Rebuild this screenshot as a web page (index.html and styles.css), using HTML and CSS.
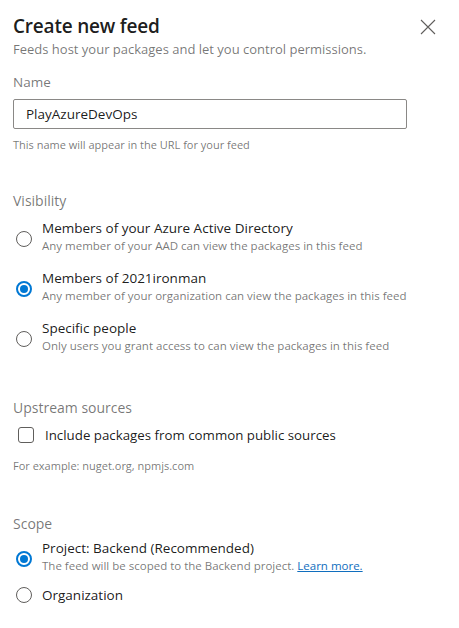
FILE: index.html
```html
<!DOCTYPE html>
<html lang="en">
<head>
  <meta charset="UTF-8">
  <title>Create new feed</title>
  <link rel="stylesheet" href="styles.css">
</head>
<body>
  <div class="panel">
    <div class="panel-header">
      <div>
        <h1 class="title">Create new feed</h1>
        <p class="subtitle">Feeds host your packages and let you control permissions.</p>
      </div>
      <button class="close" aria-label="Close">
        <svg width="16" height="16" viewBox="0 0 16 16"><path d="M1 1L15 15M15 1L1 15" stroke="#605e5c" stroke-width="1.1" fill="none"/></svg>
      </button>
    </div>

    <div class="section name-section">
      <label class="field-label" for="feed_name">Name</label>
      <input type="text" id="feed_name" class="text-input" value="PlayAzureDevOps">
      <p class="helper">This name will appear in the URL for your feed</p>
    </div>

    <div class="section visibility">
      <h2 class="section-title">Visibility</h2>
      <div class="option">
        <span class="radio"></span>
        <div class="option-text">
          <div class="option-label">Members of your Azure Active Directory</div>
          <div class="option-desc">Any member of your AAD can view the packages in this feed</div>
        </div>
      </div>
      <div class="option">
        <span class="radio checked"></span>
        <div class="option-text">
          <div class="option-label">Members of 2021ironman</div>
          <div class="option-desc">Any member of your organization can view the packages in this feed</div>
        </div>
      </div>
      <div class="option">
        <span class="radio"></span>
        <div class="option-text">
          <div class="option-label">Specific people</div>
          <div class="option-desc">Only users you grant access to can view the packages in this feed</div>
        </div>
      </div>
    </div>

    <div class="section upstream">
      <h2 class="section-title">Upstream sources</h2>
      <div class="check-row">
        <span class="checkbox"></span>
        <span class="option-label">Include packages from common public sources</span>
      </div>
      <p class="helper">For example: nuget.org, npmjs.com</p>
    </div>

    <div class="section scope">
      <h2 class="section-title">Scope</h2>
      <div class="option">
        <span class="radio checked"></span>
        <div class="option-text">
          <div class="option-label">Project: Backend (Recommended)</div>
          <div class="option-desc">The feed will be scoped to the Backend project. <a href="#">Learn more.</a></div>
        </div>
      </div>
      <div class="option single">
        <span class="radio"></span>
        <div class="option-text">
          <div class="option-label">Organization</div>
        </div>
      </div>
    </div>
  </div>
</body>
</html>
```

FILE: styles.css
```css
body {
  margin: 0;
  background: #fff;
  font-family: "Open Sans", "Noto Sans", Arial, sans-serif;
  color: rgba(0, 0, 0, 0.9);
}

.panel {
  padding: 12px 13px;
}

.panel-header {
  display: flex;
  justify-content: space-between;
  align-items: flex-start;
}

.title {
  margin: 0;
  font-size: 19px;
  font-weight: 600;
  line-height: 28px;
  letter-spacing: -0.2px;
}

.subtitle {
  margin: 0;
  font-size: 13px;
  line-height: 18px;
  color: rgba(0, 0, 0, 0.55);
}

.close {
  border: none;
  background: none;
  padding: 0;
  margin: 7px 10px 0 0;
  width: 16px;
  height: 16px;
  cursor: pointer;
}

.close svg {
  display: block;
}

.section {
  display: flex;
  flex-direction: column;
}

.name-section {
  margin-top: 14px;
}

.field-label {
  font-size: 13.5px;
  line-height: 20px;
  color: rgba(0, 0, 0, 0.55);
}

.text-input {
  margin-top: 7px;
  width: 394px;
  height: 30px;
  box-sizing: border-box;
  border: 1px solid #8a8886;
  border-radius: 2px;
  padding: 0 12px;
  font-family: inherit;
  font-size: 13.5px;
  color: rgba(0, 0, 0, 0.9);
}

.helper {
  margin: 8px 0 0;
  font-size: 11px;
  line-height: 16px;
  color: rgba(0, 0, 0, 0.55);
}

.section-title {
  margin: 0;
  font-size: 14px;
  font-weight: 400;
  line-height: 20px;
  color: rgba(0, 0, 0, 0.55);
}

.visibility {
  margin-top: 38px;
}

.option {
  display: flex;
  align-items: flex-start;
  gap: 10px;
  margin-top: 7px;
}

.option + .option {
  margin-top: 14px;
}

.scope .option {
  margin-top: 4px;
}

.scope .option.single {
  margin-top: 11px;
  align-items: center;
}

.radio {
  flex: none;
  width: 16px;
  height: 16px;
  box-sizing: border-box;
  border: 1px solid #605e5c;
  border-radius: 50%;
  margin: 13px 0 0 3px;
  position: relative;
}

.option.single .radio {
  margin-top: 0;
}

.radio.checked {
  border: 2px solid #0078d4;
}

.radio.checked::after {
  content: "";
  position: absolute;
  left: 2px;
  top: 2px;
  width: 8px;
  height: 8px;
  border-radius: 50%;
  background: #0078d4;
}

.option-label {
  font-size: 13.5px;
  line-height: 20px;
  color: rgba(0, 0, 0, 0.9);
}

.option-desc {
  font-size: 11.5px;
  line-height: 16px;
  color: rgba(0, 0, 0, 0.55);
}

.option-desc a {
  color: #106ebe;
}

.upstream {
  margin-top: 44px;
}

.check-row {
  display: flex;
  align-items: center;
  gap: 11px;
  margin-top: 7px;
}

.check-row .option-label {
  font-size: 13.3px;
}

.checkbox {
  width: 16px;
  height: 16px;
  box-sizing: border-box;
  border: 1px solid #605e5c;
  border-radius: 3px;
  margin-left: 5px;
}

.upstream .helper {
  margin-top: 13px;
}

.scope {
  margin-top: 40px;
}
```
